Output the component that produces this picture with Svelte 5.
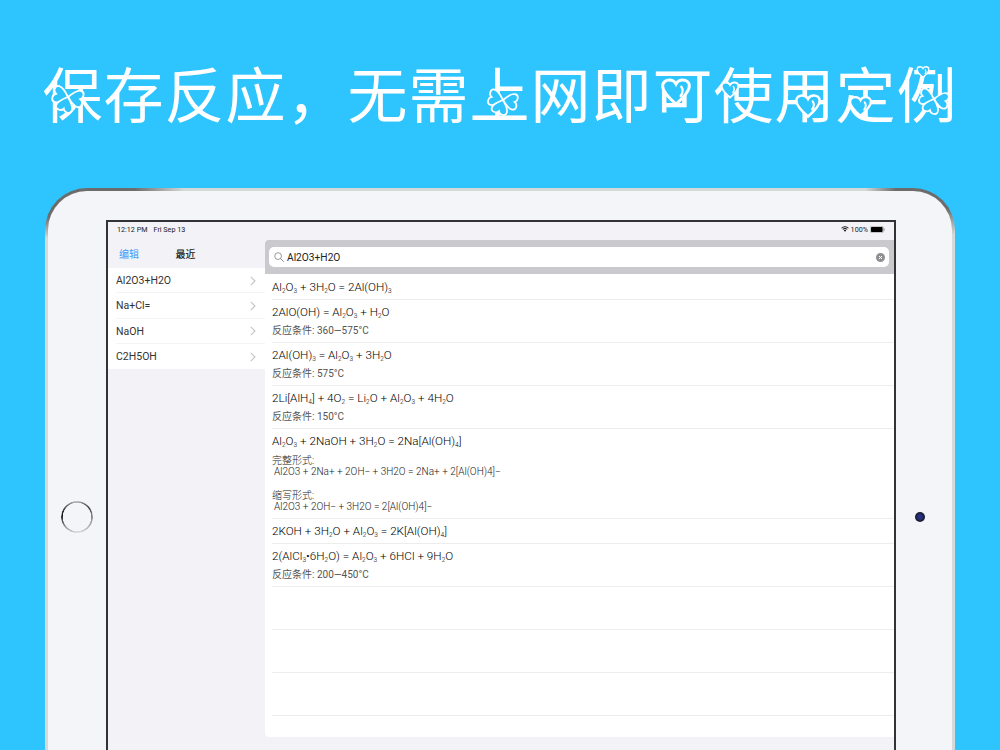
<script>
  const recents = ['Al2O3+H2O', 'Na+Cl=', 'NaOH', 'C2H5OH'];
  const reactions = [
    { f: 'Al₂O₃ + 3H₂O = 2Al(OH)₃', h: 25 },
    { f: '2AlO(OH) = Al₂O₃ + H₂O', c: '反应条件: 360—575°C', h: 43 },
    { f: '2Al(OH)₃ = Al₂O₃ + 3H₂O', c: '反应条件: 575°C', h: 43 },
    { f: '2Li[AlH₄] + 4O₂ = Li₂O + Al₂O₃ + 4H₂O', c: '反应条件: 150°C', h: 43 },
    {
      f: 'Al₂O₃ + 2NaOH + 3H₂O = 2Na[Al(OH)₄]',
      forms: [
        ['完整形式:', 'Al2O3 + 2Na+ + 2OH− + 3H2O = 2Na+ + 2[Al(OH)4]−'],
        ['缩写形式:', 'Al2O3 + 2OH− + 3H2O = 2[Al(OH)4]−']
      ],
      h: 90
    },
    { f: '2KOH + 3H₂O + Al₂O₃ = 2K[Al(OH)₄]', h: 25 },
    { f: '2(AlCl₃•6H₂O) = Al₂O₃ + 6HCl + 9H₂O', c: '反应条件: 200—450°C', h: 43 },
    { f: '', h: 43 },
    { f: '', h: 43 },
    { f: '', h: 43 }
  ];
  // Split a formula into plain runs and subscript runs so digits render as real small text.
  function parts(s) {
    const map = { '₂': '2', '₃': '3', '₄': '4' };
    return [...s].map((ch) => (map[ch] ? { t: map[ch], sub: true } : { t: ch, sub: false }));
  }
  const heartPath = 'M12 21C5 15 2 11 2 7.5 2 4.5 4.5 3 7 3c2 0 4 1 5 3 1-2 3-3 5-3 2.5 0 5 1.5 5 4.5 0 3.5-3 7.5-10 13.5z';
  // Ornaments of the headline lettering: centre x, centre y (in the page), size, kind.
  const ornaments = [
    { x: 68, y: 97, s: 40, k: 'clover' },
    { x: 503, y: 100, s: 38, k: 'clover' },
    { x: 676, y: 92, s: 32, k: 'heart' },
    { x: 730, y: 90, s: 20, k: 'heart' },
    { x: 808, y: 106, s: 28, k: 'heart' },
    { x: 860, y: 106, s: 25, k: 'heart' },
    { x: 923, y: 72, s: 14, k: 'heart' },
    { x: 934, y: 99, s: 38, k: 'clover' }
  ];
  const petals = [-75, 100, 200];
</script>

<div class="page">
  <div class="top">
    <h1 class="headline">保存反应，无需上网即可使用定例</h1>
    {#each ornaments as o}
      <svg class="orn" viewBox="0 0 24 24" width={o.s} height={o.s} style="left:{o.x - o.s / 2}px;top:{o.y - o.s / 2}px">
        {#if o.k === 'heart'}
          <path d={heartPath} fill="#2ec5ff" stroke="#fff" stroke-width="2.2"/>
          <path d="M16 8c1.5 2 1 5-.5 7" fill="none" stroke="#fff" stroke-width="1.8" stroke-linecap="round"/>
        {:else}
          <g fill="#2ec5ff" stroke="#fff" stroke-width="2.2">
            {#each petals as a}
              <path d={heartPath} transform="translate(12 12) rotate({a}) scale(.5) translate(-12 -21)"/>
            {/each}
          </g>
        {/if}
      </svg>
    {/each}
  </div>

  <div class="device">
    <div class="bezel left"><div class="home"></div></div>

    <div class="screen">
      <div class="status">
        <div class="time"><span>12:12 PM</span><span>Fri Sep 13</span></div>
        <div class="sys">
          <svg width="8" height="6" viewBox="0 0 10 8"><path d="M5 7.6 3.4 5.9a2.3 2.3 0 0 1 3.2 0zM2.6 5.1 1.7 4.2a4.7 4.7 0 0 1 6.6 0l-.9.9a3.4 3.4 0 0 0-4.8 0zM.9 3.4 0 2.5a7 7 0 0 1 10 0l-.9.9a5.7 5.7 0 0 0-8.2 0z" fill="#111"/></svg>
          <span>100%</span>
          <svg width="15" height="7" viewBox="0 0 15 7"><rect x=".3" y=".3" width="13" height="6.4" rx="1.4" fill="none" stroke="#999" stroke-width=".6"/><rect x="1" y="1" width="11.6" height="5" rx=".8" fill="#000"/><rect x="13.7" y="2.3" width="1" height="2.4" rx=".5" fill="#999"/></svg>
        </div>
      </div>

      <div class="split">
        <aside class="side">
          <div class="side-nav">
            <span class="edit">编辑</span>
            <span class="recent">最近</span>
          </div>
          <ul class="recents">
            {#each recents as r}
              <li>
                <span>{r}</span>
                <svg width="6" height="10" viewBox="0 0 6 10"><path d="M.8.8 5 5 .8 9.2" fill="none" stroke="#c4c4c8" stroke-width="1.1"/></svg>
              </li>
            {/each}
          </ul>
        </aside>

        <main class="results">
          <div class="searchbar">
            <div class="field">
              <svg width="10" height="10" viewBox="0 0 11 11"><circle cx="4.5" cy="4.5" r="3.7" fill="none" stroke="#8e8e93" stroke-width="1"/><path d="M7.2 7.2 10.4 10.4" stroke="#8e8e93" stroke-width="1.1" stroke-linecap="round"/></svg>
              <span class="query">Al2O3+H2O</span>
              <svg class="clear" width="9" height="9" viewBox="0 0 9 9"><circle cx="4.5" cy="4.5" r="4.5" fill="#8e8e93"/><path d="M3 3 6 6M6 3 3 6" stroke="#fff" stroke-width="1"/></svg>
            </div>
          </div>
          <div class="list">
            {#each reactions as r}
              <div class="row" style="height:{r.h}px">
                {#if r.f}
                  <div class="formula">
                    {#each parts(r.f) as p}{#if p.sub}<sub>{p.t}</sub>{:else}{p.t}{/if}{/each}
                  </div>
                {/if}
                {#if r.c}<div class="cond">{r.c}</div>{/if}
                {#if r.forms}
                  <div class="forms">
                    {#each r.forms as fm}
                      <div class="form">
                        <div class="form-title">{fm[0]}</div>
                        <div class="form-eq">{fm[1]}</div>
                      </div>
                    {/each}
                  </div>
                {/if}
              </div>
            {/each}
          </div>
        </main>
      </div>
    </div>

    <div class="bezel right"><div class="camera"></div></div>
  </div>
</div>

<style>
  :global(body) {
    margin: 0;
    background: #2ec5ff;
  }
  .page {
    width: 1000px;
    height: 750px;
    overflow: hidden;
    background: #2ec5ff;
    display: flex;
    flex-direction: column;
    align-items: center;
    font-family: Roboto, "Noto Sans CJK SC", sans-serif;
  }
  .top {
    position: relative;
    width: 1000px;
    height: 188px;
    flex: none;
    display: flex;
    justify-content: center;
  }
  .orn {
    position: absolute;
  }
  .headline {
    margin: 0;
    padding-top: 52px;
    font: 400 60px/80px "Noto Sans CJK SC", sans-serif;
    letter-spacing: 1px;
    color: #fff;
    white-space: nowrap;
  }
  .device {
    flex: none;
    box-sizing: border-box;
    width: 910px;
    height: 658px;
    display: flex;
    border: 3px solid transparent;
    border-radius: 42px;
    background:
      linear-gradient(#f4f5f8, #f4f5f8) padding-box,
      radial-gradient(110px 46px at 30px 6px, #6c6c6c 55%, transparent) border-box,
      radial-gradient(60px 46px at 880px 6px, #6c6c6c 50%, transparent) border-box,
      linear-gradient(#d5dad9, #d5dad9) border-box;
  }
  .bezel {
    flex: none;
    display: flex;
    align-items: center;
    justify-content: center;
  }
  .bezel.left {
    width: 58px;
  }
  .bezel.right {
    width: 56px;
  }
  .home {
    box-sizing: border-box;
    width: 32px;
    height: 32px;
    border-radius: 50%;
    margin-right: 1px;
    background: conic-gradient(#bbb, #444 50deg, #999 100deg, #ddd 180deg, #999 230deg, #111 280deg, #888 330deg, #bbb);
    -webkit-mask: radial-gradient(circle closest-side, transparent 14px, #000 14.5px);
    mask: radial-gradient(circle closest-side, transparent 14px, #000 14.5px);
  }
  .camera {
    width: 10px;
    height: 10px;
    border-radius: 50%;
    background: radial-gradient(circle, #24308a 0 25%, #1a1d2e 60%);
    margin-right: 8px;
  }
  .screen {
    flex: none;
    box-sizing: border-box;
    width: 790px;
    height: 594px;
    margin-top: 29px;
    border: 2px solid #333;
    background: #f2f2f7;
    display: flex;
    flex-direction: column;
  }
  .status {
    height: 18px;
    box-sizing: border-box;
    padding: 0 9px 4px;
    flex: none;
    display: flex;
    justify-content: space-between;
    align-items: center;
    font-size: 7.2px;
    color: #222;
  }
  .time {
    display: flex;
    gap: 6px;
  }
  .sys {
    display: flex;
    align-items: center;
    gap: 2px;
  }
  .split {
    display: flex;
    flex: 1;
    min-height: 0;
  }
  .side {
    width: 157px;
    flex: none;
  }
  .side-nav {
    height: 28px;
    box-sizing: border-box;
    padding: 0 2px 2px 0;
    position: relative;
    display: flex;
    align-items: center;
    justify-content: center;
    font-size: 10px;
  }
  .edit {
    position: absolute;
    left: 11px;
    color: #3b99fc;
  }
  .recent {
    color: #222;
    font-weight: 500;
  }
  .recents {
    list-style: none;
    margin: 0;
    padding: 0 0 0 8px;
    background: #fff;
    height: 101px;
  }
  .recents li {
    box-sizing: border-box;
    height: 25.25px;
    padding: 1px 9px 0 0;
    display: flex;
    justify-content: space-between;
    align-items: center;
    font-size: 10.5px;
    color: #333;
    border-bottom: 1px solid #f4f4f6;
  }
  .recents li:last-child {
    border-bottom: 0;
  }
  .results {
    flex: 1;
    min-width: 0;
    height: 497px;
    border-radius: 4px 0 0 4px;
    overflow: hidden;
    background: #fff;
    display: flex;
    flex-direction: column;
  }
  .searchbar {
    flex: none;
    height: 34px;
    box-sizing: border-box;
    padding: 7px 5px 7px 4px;
    background: #c9c9ce;
  }
  .field {
    height: 20px;
    background: #fff;
    border-radius: 5px;
    display: flex;
    align-items: center;
    padding: 0 4px 0 5px;
    gap: 3px;
  }
  .query {
    flex: 1;
    font-size: 10.2px;
    color: #222;
  }
  .list {
    padding: 1px 0 0 7px;
  }
  .row {
    box-sizing: border-box;
    border-bottom: 1px solid #ededed;
    overflow: hidden;
  }
  .formula {
    font-size: 11.7px;
    font-weight: 300;
    line-height: 25px;
    height: 25px;
    color: #000;
    white-space: pre;
  }
  .formula sub {
    font-size: 6.5px;
    line-height: 0;
    vertical-align: -1.5px;
  }
  .cond {
    font-size: 10px;
    line-height: 12px;
    color: #555;
  }
  .forms {
    padding-top: 1px;
  }
  .form {
    height: 35px;
    font-size: 10px;
    font-weight: 300;
    line-height: 11px;
    color: #222;
  }
  .form-eq {
    padding-left: 2px;
  }
</style>
